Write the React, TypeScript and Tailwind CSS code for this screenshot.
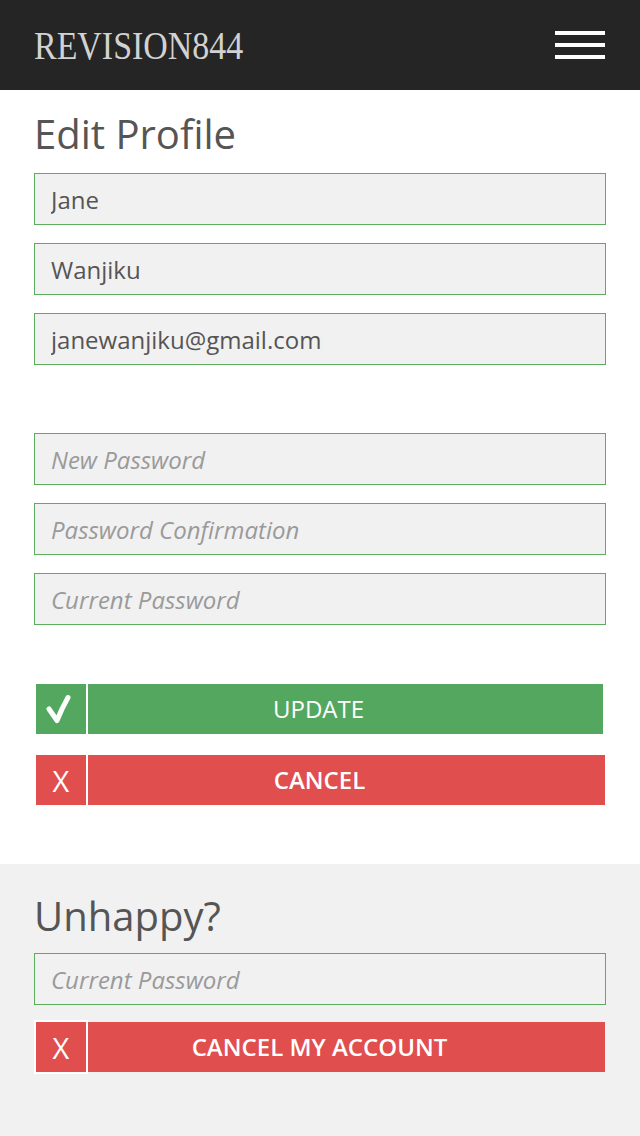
import React from "react";

function Field({ value, placeholder }: { value?: string; placeholder?: string }) {
  return (
    <input
      type="text"
      defaultValue={value}
      placeholder={placeholder}
      className="block h-[52px] w-full border border-[#5cad5f] bg-[#f1f1f1] px-[16px] text-[24px] text-[#555] outline-none placeholder:italic placeholder:text-[#9a9a9a]"
    />
  );
}

function Check() {
  return (
    <svg width="50" height="50" viewBox="0 0 50 50" fill="none">
      <path
        d="M13 25 L21 36.5 Q25.5 25 32 13.5"
        stroke="white"
        strokeWidth="5"
        strokeLinecap="round"
        strokeLinejoin="round"
      />
    </svg>
  );
}

function ActionButton({
  label,
  kind,
  bold,
  trimRight,
}: {
  label: string;
  kind: "ok" | "cancel";
  bold?: boolean;
  trimRight?: boolean;
}) {
  const bg = kind === "ok" ? "bg-[#53a75f]" : "bg-[#e04e4e]";
  return (
    <div className="flex h-[54px] w-full items-center">
      <div
        className={`flex h-[54px] w-[54px] shrink-0 items-center justify-center border-2 border-white ${bg}`}
      >
        {kind === "ok" ? (
          <Check />
        ) : (
          <span className="text-[29px] leading-none text-white">X</span>
        )}
      </div>
      <div
        className={`flex h-[50px] flex-1 items-center justify-center pr-[54px] text-[24px] text-white ${bg} ${
          bold ? "font-semibold" : "font-normal"
        } ${trimRight ? "mr-[3px]" : "mr-[1px]"}`}
      >
        {label}
      </div>
    </div>
  );
}

export default function App() {
  return (
    <div className="flex min-h-[1136px] flex-col bg-white font-['Open_Sans',sans-serif]">
      <header className="flex h-[90px] shrink-0 items-center justify-between bg-[#252525] pl-[34px] pr-[35px]">
        <span className="origin-left scale-x-[0.87] font-['Liberation_Serif',serif] text-[39px] leading-none text-[#d2d2d2]">
          REVISION844
        </span>
        <div className="flex w-[50px] flex-col gap-[8px]">
          <div className="h-[4px] bg-white" />
          <div className="h-[4px] bg-white" />
          <div className="h-[4px] bg-white" />
        </div>
      </header>

      <section className="px-[34px] pb-[57px]">
        <h1 className="mt-[22px] mb-[17px] text-[40px] font-normal leading-[44px] text-[#555]">
          Edit Profile
        </h1>
        <div className="flex flex-col gap-[18px]">
          <Field value="Jane" />
          <Field value="Wanjiku" />
          <Field value="janewanjiku@gmail.com" />
        </div>
        <div className="mt-[68px] flex flex-col gap-[18px]">
          <Field placeholder="New Password" />
          <Field placeholder="Password Confirmation" />
          <Field placeholder="Current Password" />
        </div>
        <div className="mt-[57px] flex flex-col gap-[17px]">
          <ActionButton label="UPDATE" kind="ok" trimRight />
          <ActionButton label="CANCEL" kind="cancel" bold />
        </div>
      </section>

      <section className="flex-1 bg-[#f1f1f1] px-[34px] pt-[30px] pb-[62px]">
        <h2 className="mb-[15px] text-[40px] font-normal leading-[44px] text-[#555]">
          Unhappy?
        </h2>
        <Field placeholder="Current Password" />
        <div className="mt-[15px]">
          <ActionButton label="CANCEL MY ACCOUNT" kind="cancel" bold />
        </div>
      </section>
    </div>
  );
}
